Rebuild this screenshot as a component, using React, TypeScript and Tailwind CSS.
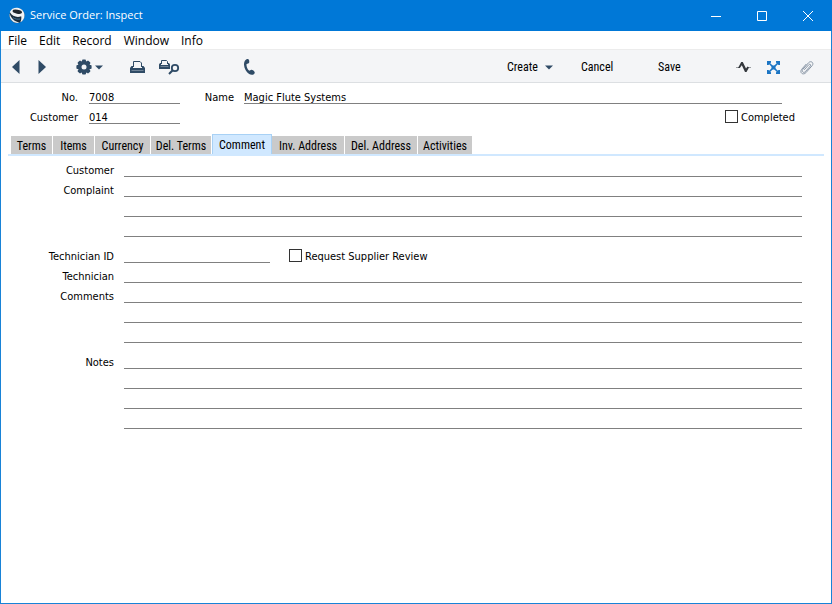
import type { ReactNode } from "react";

const INK = "#2f4b66";

function Logo() {
  return (
    <svg width="18" height="18" viewBox="0 0 18 18" aria-hidden="true">
      <circle cx="9" cy="8.500" r="7.500" fill="#1a2c3b" />
      <path d="M1.800 5C3 2.200 6 .6 9.200.8c4 .2 7.300 3.500 7.300 7.600 0 3-1.700 5.600-4.200 6.900 1-2 1.300-4 .9-6-4 1.500-9 .3-11.400-4.300z" fill="#f1f3f5" />
      <ellipse cx="9.300" cy="4.700" rx="4.800" ry="2" transform="rotate(10 9.300 4.700)" fill="#20262c" />
      <path d="M1.700 6.500C1 10.500 3 14 6.800 15.600c1.700.6 3.300.5 4.700 0C6 14.500 3 11 1.700 6.500z" fill="#e4eaee" />
      <path d="M5 10.500c2 1.600 4.500 2 7 1.500" stroke="#3f6f92" strokeWidth="1" fill="none" />
    </svg>
  );
}

function Arrow({ back = false }: { back?: boolean }) {
  return (
    <svg width="8" height="14" viewBox="0 0 8 14" aria-hidden="true">
      <path d={back ? "M7.500 0v14L0 7z" : "M.5 0v14L8 7z"} fill={INK} />
    </svg>
  );
}

function Caret() {
  return (
    <svg width="8" height="5" viewBox="0 0 8 5" aria-hidden="true">
      <path d="M0 .5h8L4 4.500z" fill={INK} />
    </svg>
  );
}

function Gear() {
  return (
    <svg width="16" height="16" viewBox="-8 -8 16 16" aria-hidden="true">
      {[0, 45, 90, 135].map((a) => (
        <rect key={a} x="-2" y="-7.600" width="4" height="15.200" rx="1" fill={INK} transform={`rotate(${a})`} />
      ))}
      <circle r="6.200" fill={INK} />
      <circle r="2.500" fill="#f4f5f7" />
    </svg>
  );
}

function Printer() {
  return (
    <svg width="15" height="12" viewBox="0 0 15 12" aria-hidden="true">
      <path d="M3.500 6V.5h6.500l1.500 1.500v4" fill="#f4f5f7" stroke={INK} />
      <path d="M1.500 5h1.500v2h9V5h1.500L15 7v5H0V7z" fill={INK} />
      <path d="M1.500 9.500h12" stroke="#6f8397" />
    </svg>
  );
}

function PrintPreview() {
  return (
    <svg width="21" height="15" viewBox="0 0 21 15" aria-hidden="true">
      <path d="M2.500 4V.5h5l1 1V4" fill="#f4f5f7" stroke={INK} />
      <path d="M1 3h1v2h7V3h1l1 1.500V9H0V4.500z" fill={INK} />
      <path d="M1.500 6.500h8" stroke="#6f8397" />
      <circle cx="16" cy="8" r="3.200" fill="#f4f5f7" stroke={INK} strokeWidth="1.800" />
      <path d="M13.700 10.300L10 14" stroke={INK} strokeWidth="2" />
    </svg>
  );
}

function Phone() {
  return (
    <svg width="11" height="16" viewBox="0 0 11 16" aria-hidden="true">
      <path d="M2.600.2c1-.5 2-.1 2.400.9.400 1.200.4 2.600-.3 3.100-.9.600-1.900.4-2.200 1-.2 2.100.9 5 2.500 6.400.7.400 1.500-.6 2.300-.8 1-.2 2.200.7 3 1.700.7 1 .6 1.700-.2 2.400-1.300 1.200-3.200 1.200-5 .1C2.200 13.200.2 9.300 0 5.800-.1 3.200.9 1 2.600.2z" fill={INK} />
    </svg>
  );
}

function Pulse() {
  return (
    <svg width="15" height="12" viewBox="0 0 15 12" aria-hidden="true">
      <path d="M0 6.500h3M12 6.500h3" stroke="#9a9da1" />
      <path d="M2 7L5.200 1h1.600l3.200 6.500L11.500 5.500 13 6.500 10.500 11H9L5.800 4.200 3.800 7z" fill="#34383d" />
    </svg>
  );
}

function Expand() {
  return (
    <svg width="13" height="13" viewBox="0 0 13 13" fill="#1b75c4" aria-hidden="true">
      <path d="M0 0h4v1.500L1.500 4H0zM9 0h4v4h-1.500L9 1.500zM0 9h1.500L4 11.500V13H0zM13 9v4H9v-1.500L11.500 9z" />
      <path d="M1.500 1.500l10 10M11.500 1.500l-10 10" stroke="#1b75c4" strokeWidth="1.600" />
      <path d="M4.500 4.500h4v4h-4z" />
    </svg>
  );
}

function Clip() {
  return (
    <svg width="14" height="15" viewBox="0 0 14 15" fill="none" stroke="#8996a6" strokeWidth="1" aria-hidden="true">
      <path d="M4.200 9.800l4.600-5.100c1.100-1.100 2.500.1 1.500 1.300l-5 5.700c-1.700 1.800-4.100-.2-2.600-2.200l5.900-6.800c2.400-2.500 5.700.2 3.600 2.900l-6.300 7.100c-2.900 2.900-6.600-.1-4.300-3.300L6.300 4" />
    </svg>
  );
}

function IconButton({ label, className = "", children }: { label: string; className?: string; children: ReactNode }) {
  return (
    <button type="button" aria-label={label} className={`flex h-[30px] shrink-0 items-center justify-center ${className}`}>
      {children}
    </button>
  );
}

const line = "block h-5 min-w-0 border-b border-[#808080] bg-transparent pt-2 outline-none";

function Lines({ id, labels, count }: { id: string; labels: string[]; count: number }) {
  return (
    <div className="flex">
      <div className="w-[113px] shrink-0 text-right">
        {labels.map((text, i) => (
          <label key={text} htmlFor={`${id}-${i}`} className="block h-5 whitespace-nowrap pt-[6px] leading-4">
            {text}
          </label>
        ))}
      </div>
      <div className="ml-[10px] flex-1">
        {Array.from({ length: count }, (_, i) => (
          <input key={i} id={`${id}-${i}`} aria-label={`${labels.join(" ")} ${i + 1}`} className={`${line} w-full`} />
        ))}
      </div>
    </div>
  );
}

function Check({ id, label }: { id: string; label: string }) {
  return (
    <span className="flex h-5 items-start gap-[3px] pt-[6px]">
      <input id={id} type="checkbox" className="size-[13px] shrink-0 appearance-none border border-[#333] bg-white checked:bg-[#333]" />
      <label htmlFor={id} className="whitespace-nowrap leading-4">
        {label}
      </label>
    </span>
  );
}

const tabs = [
  { name: "Terms", width: "w-[41px]" },
  { name: "Items", width: "w-[41px]" },
  { name: "Currency", width: "w-[55px]" },
  { name: "Del. Terms", width: "w-[60px]" },
  { name: "Comment", width: "w-[60px]" },
  { name: "Inv. Address", width: "w-[72px]" },
  { name: "Del. Address", width: "w-[72px]" },
  { name: "Activities", width: "w-[54px]" },
];

export default function App() {
  return (
    <div className="flex min-h-screen flex-col border-x border-b border-[#1883d7] bg-white font-['DejaVu_Sans_Condensed','DejaVu_Sans',sans-serif] text-[11px] text-black">
      <header className="-mx-px flex h-[31px] items-center bg-[#0078d7] pl-2 pr-px font-['Open_Sans',sans-serif] text-[11px] text-white">
        <Logo />
        <h1 className="ml-1">Service Order: Inspect</h1>
        <div className="ml-auto flex">
          <button type="button" aria-label="Minimize" className="flex h-[31px] w-[46px] items-center justify-center">
            <svg width="10" height="10" viewBox="0 0 10 10" stroke="white"><path d="M0 5.500h10" /></svg>
          </button>
          <button type="button" aria-label="Maximize" className="flex h-[31px] w-[46px] items-center justify-center">
            <svg width="10" height="10" viewBox="0 0 10 10" stroke="white" fill="none"><path d="M.5 .5h9v9h-9z" /></svg>
          </button>
          <button type="button" aria-label="Close" className="flex h-[31px] w-[46px] items-center justify-center">
            <svg width="10" height="10" viewBox="0 0 10 10" stroke="white"><path d="M0 0l10 10M10 0L0 10" /></svg>
          </button>
        </div>
      </header>

      <nav aria-label="Menu bar" className="flex h-[18px] items-center gap-3 pl-[7px] pt-[2px] font-['Open_Sans',sans-serif] text-[12px]">
        {["File", "Edit", "Record", "Window", "Info"].map((m) => (
          <button key={m} type="button" className="leading-[18px]">{m}</button>
        ))}
      </nav>

      <div role="toolbar" aria-label="Record tools" className="flex h-[34px] items-center border-t border-b border-t-[#ececec] border-b-[#dcdfe2] bg-[#f4f5f7] px-2 pt-[2px] font-['Roboto_Condensed',Roboto,sans-serif] text-[12px]">
        <IconButton label="Previous" className="w-[14px]"><Arrow back /></IconButton>
        <IconButton label="Next" className="ml-3 w-[14px]"><Arrow /></IconButton>
        <IconButton label="Operations" className="ml-[27px] gap-[3px]"><Gear /><Caret /></IconButton>
        <IconButton label="Print" className="ml-[27px]"><Printer /></IconButton>
        <IconButton label="Preview" className="ml-[14px]"><PrintPreview /></IconButton>
        <IconButton label="Call" className="ml-16"><Phone /></IconButton>
        <div className="ml-auto flex items-center">
          <button type="button" className="flex h-[30px] w-[74px] items-center gap-[7px]">Create <Caret /></button>
          <button type="button" className="h-[30px] w-[77px] text-left">Cancel</button>
          <button type="button" className="h-[30px] w-[78px] text-left">Save</button>
          <IconButton label="Activity"><Pulse /></IconButton>
          <IconButton label="Expand" className="ml-4"><Expand /></IconButton>
          <IconButton label="Attachments" className="ml-5 mr-[9px]"><Clip /></IconButton>
        </div>
      </div>

      <main className="flex-1">
        <form>
          <div className="flex pt-px">
            <label htmlFor="number" className="h-5 w-[77px] pt-[6px] text-right leading-4">No.</label>
            <input id="number" defaultValue="7008" className={`${line} ml-[11px] w-[91px]`} />
            <label htmlFor="name" className="h-5 w-[54px] pt-[6px] text-right leading-4">Name</label>
            <input id="name" defaultValue="Magic Flute Systems" className={`${line} ml-[10px] mr-[49px] flex-1`} />
          </div>
          <div className="flex">
            <label htmlFor="customer" className="h-5 w-[77px] pt-[6px] text-right leading-4">Customer</label>
            <input id="customer" defaultValue="014" className={`${line} ml-[11px] w-[91px]`} />
            <div className="ml-auto mr-9"><Check id="completed" label="Completed" /></div>
          </div>

          <div role="tablist" className="ml-[7px] mr-[7px] mt-[10px] flex items-end border-b-2 border-[#d0e8ff] pl-[3px] font-['Roboto_Condensed',Roboto,sans-serif] text-[12px]">
            {tabs.map((t) => {
              const active = t.name === "Comment";
              return (
                <button
                  key={t.name}
                  type="button"
                  role="tab"
                  aria-selected={active}
                  className={`${t.width} whitespace-nowrap ${active ? "h-5 border border-b-0 border-[#a8d1f5] bg-[#d0e8ff] leading-[18px]" : "mr-px h-[18px] bg-[#cacaca] pt-px leading-[18px]"}`}
                >
                  {t.name}
                </button>
              );
            })}
          </div>

          <div className="flex flex-col pr-[29px] pt-px">
            <Lines id="complaint" labels={["Customer", "Complaint"]} count={4} />
            <div className="mt-[6px] flex">
              <label htmlFor="technician" className="h-5 w-[113px] pt-[6px] text-right leading-4">Technician ID</label>
              <input id="technician" className={`${line} ml-[10px] w-[146px]`} />
              <div className="ml-[19px]"><Check id="review" label="Request Supplier Review" /></div>
            </div>
            <Lines id="comments" labels={["Technician", "Comments"]} count={4} />
            <div className="pt-[6px]">
              <Lines id="notes" labels={["Notes"]} count={4} />
            </div>
          </div>
        </form>
      </main>
    </div>
  );
}
